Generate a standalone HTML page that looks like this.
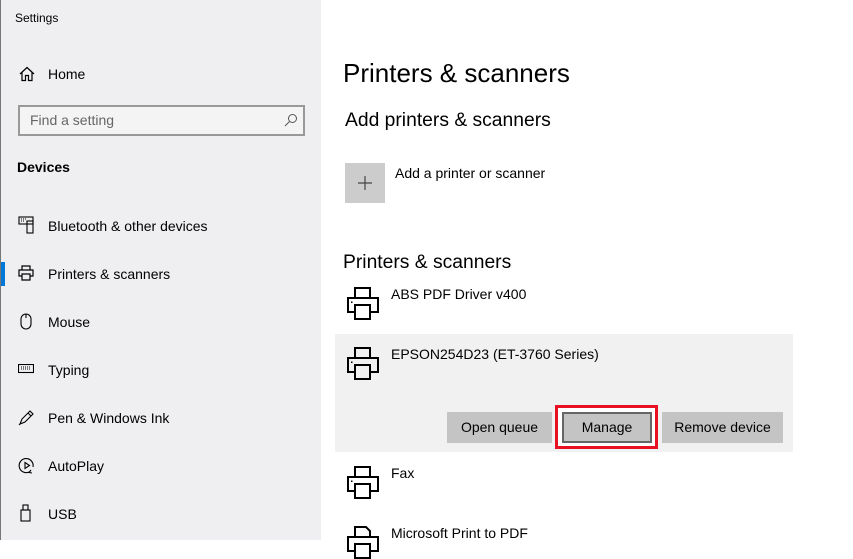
<!DOCTYPE html>
<html><head><meta charset="utf-8"><style>
*{margin:0;padding:0;box-sizing:border-box}
body{width:853px;height:540px;overflow:hidden;font-family:"Liberation Sans",sans-serif;color:#000;background:#fff;position:relative}
.side{position:absolute;left:0;top:0;width:321px;height:540px;background:#efeff2;border-left:1px solid #777}
.a{position:absolute;white-space:nowrap}
.nav{position:absolute;left:47px;font-size:14px}
.ic{position:absolute;left:17px}
.btn{position:absolute;top:412px;height:31px;background:#c4c4c4;font-size:14px;text-align:center;line-height:31px}
</style></head><body>
<div class="side">
<div class="a" style="left:14px;top:11px;font-size:12px">Settings</div>
<svg class="ic" style="left:18px;top:66px" width="16" height="16" viewBox="0 0 16 16" fill="none" stroke="#000" stroke-width="1.2"><path d="M1 8L8 1.5L15 8M3 6.5V14.5H6.5V9.5H9.5V14.5H13V6.5"/></svg>
<div class="nav" style="top:66px;font-size:14px">Home</div>
<div class="a" style="left:17px;top:105px;width:287px;height:31px;border:2px solid #999;background:#f4f4f4"></div>
<div class="a" style="left:29px;top:112px;font-size:14px;color:#666">Find a setting</div>
<svg class="a" style="left:283px;top:113px" width="14" height="14" viewBox="0 0 14 14" fill="none" stroke="#555" stroke-width="1"><circle cx="8.5" cy="5.5" r="4"/><path d="M5.5 8.5L1 13"/></svg>
<div class="a" style="left:16px;top:159px;font-size:14px;font-weight:bold">Devices</div>
<div class="a" style="left:0;top:262px;width:4px;height:24px;background:#0078d7"></div>
<svg class="ic" style="top:216px" width="16" height="18" viewBox="0 0 16 18" fill="none" stroke="#000" stroke-width="1.1"><rect x="1" y="1" width="14" height="7"/><rect x="9" y="5" width="6" height="12"/><path d="M3 3h1M5 3h1M7 3h1M3 5h1M5 5h1"/></svg>
<div class="nav" style="top:218px">Bluetooth &amp; other devices</div>
<svg class="ic" style="top:265px" width="16" height="16" viewBox="0 0 16 16" fill="none" stroke="#000" stroke-width="1.2"><path d="M4 5V1H12V5M4 11H1V5H15V11H12M4 9H12V15H4Z"/></svg>
<div class="nav" style="top:266px">Printers &amp; scanners</div>
<svg class="ic" style="left:19px;top:313px" width="12" height="17" viewBox="0 0 12 17" fill="none" stroke="#000" stroke-width="1.1"><rect x="1" y="1" width="10" height="15" rx="5"/><path d="M6 1V5"/></svg>
<div class="nav" style="top:314px">Mouse</div>
<svg class="ic" style="top:364px" width="16" height="10" viewBox="0 0 16 10" fill="none" stroke="#000" stroke-width="1.1"><rect x="0.5" y="0.5" width="15" height="8"/><path d="M3 3h10M3 5h10" stroke-dasharray="1 1"/></svg>
<div class="nav" style="top:362px">Typing</div>
<svg class="ic" style="top:409px" width="17" height="17" viewBox="0 0 17 17" fill="none" stroke="#000" stroke-width="1.1"><path d="M2 15L4 10L12 2L15 5L7 13Z M10 4L13 7M1 16L3 14"/></svg>
<div class="nav" style="top:410px">Pen &amp; Windows Ink</div>
<svg class="ic" style="top:457px" width="17" height="17" viewBox="0 0 17 17" fill="none" stroke="#000" stroke-width="1.1"><path d="M11 15A7 7 0 1 1 15 10"/><path d="M7 5.5L11.5 8.5L7 11.5Z"/><path d="M13 13L11 15.5L14 16"/></svg>
<div class="nav" style="top:458px">AutoPlay</div>
<svg class="ic" style="left:19px;top:504px" width="11" height="18" viewBox="0 0 11 18" fill="none" stroke="#000" stroke-width="1.1"><rect x="1" y="6" width="9" height="11"/><rect x="3" y="1" width="5" height="5"/></svg>
<div class="nav" style="top:506px">USB</div>
</div>

<div class="a" style="left:343px;top:58px;font-size:26px;font-weight:300">Printers &amp; scanners</div>
<div class="a" style="left:345px;top:110px;font-size:19.3px">Add printers &amp; scanners</div>
<div class="a" style="left:345px;top:163px;width:40px;height:40px;background:#ccc"></div>
<svg class="a" style="left:355px;top:173px" width="20" height="20" viewBox="0 0 20 20" stroke="#444" stroke-width="1.2"><path d="M10 3V17M3 10H17"/></svg>
<div class="a" style="left:395px;top:165px;font-size:14px">Add a printer or scanner</div>
<div class="a" style="left:343px;top:252px;font-size:19.3px">Printers &amp; scanners</div>

<div class="a" style="left:335px;top:334px;width:458px;height:118px;background:#f1f1f1"></div>

<svg width="0" height="0" style="position:absolute"><defs><g id="pr" fill="none" stroke="#000" stroke-width="2"><path d="M8 11V1H23V11M8 25H1V11H31V25H23M8 18H23V32H8Z"/><rect x="4" y="14.5" width="1.5" height="1.5" fill="#000" stroke="none"/></g></defs></svg>
<svg class="a" style="left:347px;top:287px" width="33" height="33"><use href="#pr"/></svg>
<svg class="a" style="left:347px;top:347px" width="33" height="33"><use href="#pr"/></svg>
<svg class="a" style="left:347px;top:466px" width="33" height="33"><use href="#pr"/></svg>
<svg class="a" style="left:347px;top:526px" width="33" height="33" fill="none" stroke="#000" stroke-width="2"><path d="M8 11V1H19L23 5V11M8 25H1V11H31V25H23M8 18H23V32H8Z"/></svg>

<div class="a" style="left:391px;top:286px;font-size:14px">ABS PDF Driver v400</div>
<div class="a" style="left:391px;top:346px;font-size:14px">EPSON254D23 (ET-3760 Series)</div>
<div class="a" style="left:391px;top:465px;font-size:14px">Fax</div>
<div class="a" style="left:391px;top:525px;font-size:14px">Microsoft Print to PDF</div>

<div class="btn" style="left:447px;width:105px">Open queue</div>
<div class="a" style="left:555px;top:405px;width:103px;height:44px;border:3px solid #e81123;background:#fff"></div>
<div class="btn" style="left:562px;width:90px;border:2px solid #666;line-height:27px">Manage</div>
<div class="btn" style="left:662px;width:121px">Remove device</div>
</body></html>
